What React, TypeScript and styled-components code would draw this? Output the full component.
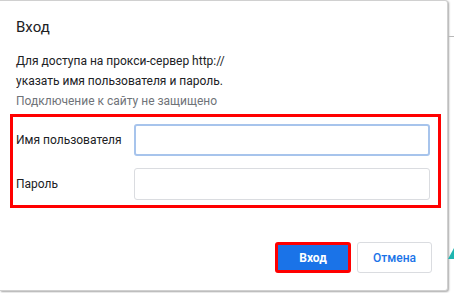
import React from 'react'
import styled, { createGlobalStyle } from 'styled-components'

const GlobalStyle = createGlobalStyle`
    html, body {
        margin: 0;
        padding: 0;
        background: #ffffff;
    }
    body {
        font-family: Roboto, "Noto Sans", "Liberation Sans", sans-serif;
        color: #202124;
    }
`

const Page = styled.div`
    display: flex;
    width: 454px;
    height: 293px;
    overflow: hidden;
`

const Dialog = styled.div`
    box-sizing: border-box;
    width: 448px;
    height: 291px;
    background: #fff;
    border: 1px solid #d0d0d0;
    border-left: none;
    border-radius: 0 3px 3px 0;
    box-shadow: 1px 1px 2px rgba(0, 0, 0, 0.35);
    padding: 16px 15px 0 16px;
    display: flex;
    flex-direction: column;
`

const Title = styled.h1`
    margin: 0 0 14px;
    font-size: 15px;
    font-weight: 400;
    line-height: 20px;
`

const Text = styled.p<{ $muted?: boolean }>`
    margin: 0;
    font-size: 12px;
    line-height: 20px;
    color: ${props => props.$muted ? '#6f7378' : '#202124'};
`

const Fields = styled.div`
    margin: 3px -9px 0 -6px;
    border: 3px solid #ff0000;
    padding: 7px 8px 5px 3px;
    display: flex;
    flex-direction: column;
    gap: 12px;
`

const Row = styled.label`
    display: flex;
    align-items: center;
    font-size: 12px;
    color: #202124;

    span {
        width: 118px;
    }
`

const Input = styled.div<{ $focused?: boolean }>`
    box-sizing: border-box;
    flex: 1;
    height: 32px;
    border-radius: 3px;
    border: ${props => props.$focused ? '2px solid #a7c4ec' : '1px solid #dadce0'};
`

const Footer = styled.div`
    margin-top: auto;
    margin-bottom: 17px;
    display: flex;
    justify-content: flex-end;
    gap: 6px;
`

const Button = styled.button<{ $primary?: boolean }>`
    box-sizing: border-box;
    height: 31px;
    padding: 0;
    border-radius: 3px;
    font-family: inherit;
    font-size: 12px;
    font-weight: ${props => props.$primary ? 700 : 500};
    background: ${props => props.$primary ? '#1a73e8' : '#fff'};
    color: ${props => props.$primary ? '#fff' : '#1a73e8'};
    border: ${props => props.$primary ? '3px solid #ff0000' : '1px solid #dadce0'};
    width: ${props => props.$primary ? '76px' : '75px'};
`

const Backdrop = styled.div`
    flex: 1;
    display: flex;
    flex-direction: column;
`

const Line = styled.div`
    margin-top: 36px;
    height: 1px;
    background: #b8b8b8;
`

const Triangle = styled.div`
    margin-top: 211px;
    width: 0;
    height: 0;
    border-left: 6px solid transparent;
    border-bottom: 11px solid #1fb5b0;
`

export default function App() {
    return (
        <>
            <GlobalStyle />
            <Page>
                <Dialog>
                    <Title>Вход</Title>
                    <Text>Для доступа на прокси-сервер http://</Text>
                    <Text>указать имя пользователя и пароль.</Text>
                    <Text $muted>Подключение к сайту не защищено</Text>
                    <Fields>
                        <Row>
                            <span>Имя пользователя</span>
                            <Input $focused />
                        </Row>
                        <Row>
                            <span>Пароль</span>
                            <Input />
                        </Row>
                    </Fields>
                    <Footer>
                        <Button $primary>Вход</Button>
                        <Button>Отмена</Button>
                    </Footer>
                </Dialog>
                <Backdrop>
                    <Line />
                    <Triangle />
                </Backdrop>
            </Page>
        </>
    )
}
